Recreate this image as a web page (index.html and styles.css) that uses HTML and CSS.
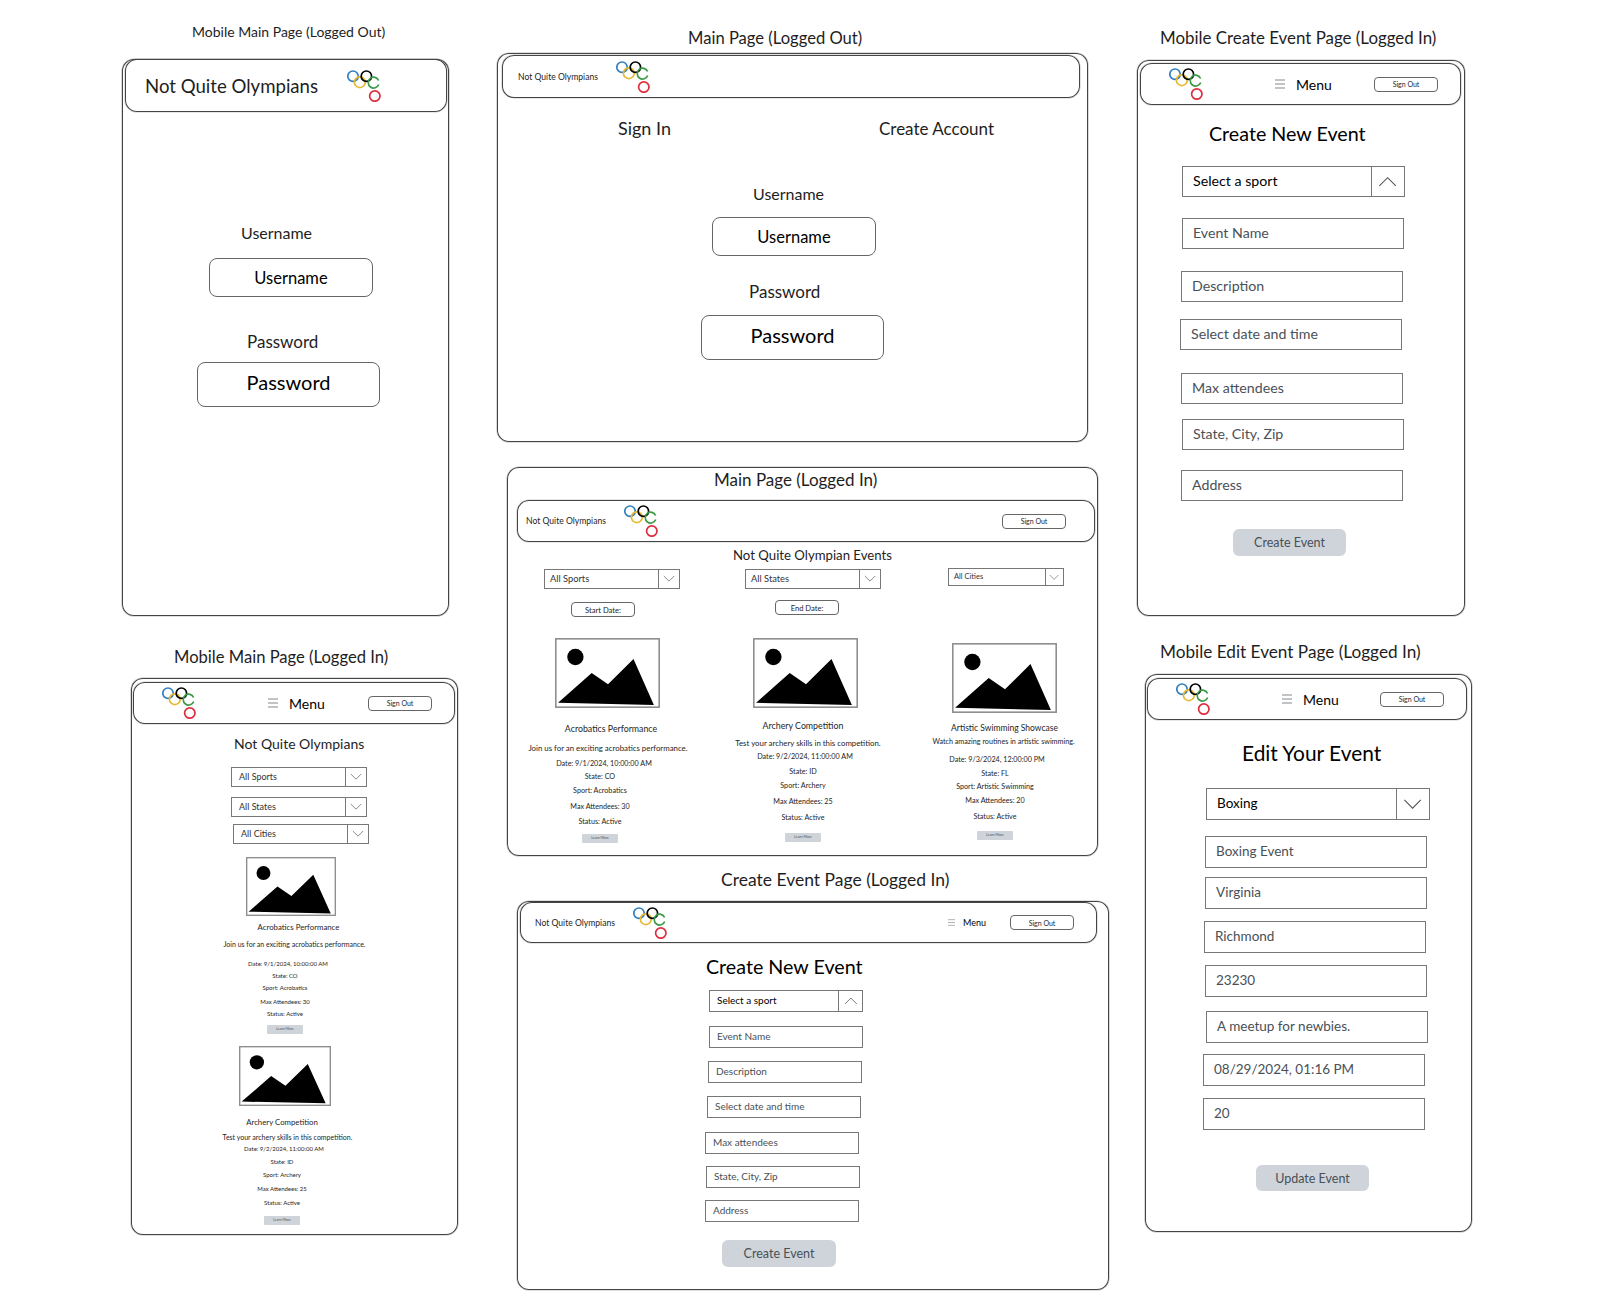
FILE: index.html
```html
<!DOCTYPE html>
<html lang="en">
<head>
    <meta charset="UTF-8">
    <meta name="viewport" content="width=device-width, initial-scale=1.0">
    <title>Not Quite Olympians wireframes</title>
    <link rel="stylesheet" href="styles.css">
</head>
<body>
    <!-- shared drawings -->
    <svg class="sprite" aria-hidden="true">
        <symbol id="rings" viewBox="0 0 34 32">
            <g fill="none" stroke-width="1.7">
                <circle cx="6" cy="6.2" r="5.2" stroke="#2f7fc1"/>
                <circle cx="12.8" cy="12.2" r="5.4" stroke="#e6b92e"/>
                <circle cx="19.4" cy="6.2" r="5.2" stroke="#000"/>
                <path d="M31.6 10.5A5.4 5.4 0 1 0 31.7 14.5" stroke="#3a9a48"/>
                <circle cx="27.8" cy="26" r="5.2" stroke="#dc2f3e"/>
            </g>
        </symbol>
        <symbol id="photo" viewBox="0 0 103 68" preserveAspectRatio="none">
            <rect x="0.8" y="0.8" width="101.4" height="66.4" fill="#fff" stroke="#8a8a8a" stroke-width="1.5"/>
            <circle cx="20" cy="18.5" r="8"/>
            <path d="M3 63 36 34 52 45 77 20.5 97 65Z"/>
        </symbol>
        <symbol id="chev-down" viewBox="0 0 14 8">
            <path d="M1 1 7 7 13 1" fill="none" stroke="#555" stroke-width="0.8"/>
        </symbol>
        <symbol id="chev-up" viewBox="0 0 14 8">
            <path d="M1 7 7 1 13 7" fill="none" stroke="#555" stroke-width="0.8"/>
        </symbol>
        <symbol id="burger" viewBox="0 0 10 10">
            <path d="M0 1H10M0 5H10M0 9H10" stroke="#adb1b5" stroke-width="1.4"/>
        </symbol>
    </svg>

    <main class="canvas">

        <!-- Mobile main page, logged out -->
        <h2 class="caption cap-a">Mobile Main Page (Logged Out)</h2>
        <section class="frame frame-a">
            <header class="nav nav-a">
                <span class="brand">Not Quite Olympians</span>
                <svg class="rings"><use href="#rings"/></svg>
            </header>
            <label class="login-label a-user-label">Username</label>
            <div class="pill pill-user a-user">Username</div>
            <label class="login-label pass-label a-pass-label">Password</label>
            <div class="pill pill-pass a-pass">Password</div>
        </section>

        <!-- Main page, logged out -->
        <h2 class="caption cap-b">Main Page (Logged Out)</h2>
        <section class="frame frame-b">
            <header class="nav nav-b">
                <span class="brand">Not Quite Olympians</span>
                <svg class="rings"><use href="#rings"/></svg>
            </header>
            <span class="login-label b-signin">Sign In</span>
            <span class="login-label b-create">Create Account</span>
            <label class="login-label b-user-label">Username</label>
            <div class="pill pill-user b-user">Username</div>
            <label class="login-label pass-label b-pass-label">Password</label>
            <div class="pill pill-pass b-pass">Password</div>
        </section>

        <!-- Main page, logged in -->
        <section class="frame frame-c">
            <h2 class="caption cap-c">Main Page (Logged In)</h2>
            <header class="nav nav-c">
                <span class="brand">Not Quite Olympians</span>
                <svg class="rings"><use href="#rings"/></svg>
                <button class="sign-out">Sign Out</button>
            </header>
            <h3 class="heading c-heading">Not Quite Olympian Events</h3>

            <div class="select select-sm c-sports"><span>All Sports</span><i class="arrow"><svg><use href="#chev-down"/></svg></i></div>
            <div class="select select-sm c-states"><span>All States</span><i class="arrow"><svg><use href="#chev-down"/></svg></i></div>
            <div class="select select-xs c-cities"><span>All Cities</span><i class="arrow"><svg><use href="#chev-down"/></svg></i></div>
            <button class="sign-out date-btn c-start">Start Date:</button>
            <button class="sign-out date-btn c-end">End Date:</button>

            <svg class="photo c-photo-1"><use href="#photo"/></svg>
            <svg class="photo c-photo-2"><use href="#photo"/></svg>
            <svg class="photo c-photo-3"><use href="#photo"/></svg>

            <article class="event ev-c1">
                <h4>Acrobatics Performance</h4>
                <p class="desc">Join us for an exciting acrobatics performance.</p>
                <p class="date">Date: 9/1/2024, 10:00:00 AM</p>
                <p>State: CO</p>
                <p>Sport: Acrobatics</p>
                <p>Max Attendees: 30</p>
                <p>Status: Active</p>
                <button class="learn">Learn More</button>
            </article>
            <article class="event ev-c2">
                <h4>Archery Competition</h4>
                <p class="desc">Test your archery skills in this competition.</p>
                <p class="date">Date: 9/2/2024, 11:00:00 AM</p>
                <p>State: ID</p>
                <p>Sport: Archery</p>
                <p>Max Attendees: 25</p>
                <p>Status: Active</p>
                <button class="learn">Learn More</button>
            </article>
            <article class="event ev-c3">
                <h4>Artistic Swimming Showcase</h4>
                <p class="desc">Watch amazing routines in artistic swimming.</p>
                <p class="date">Date: 9/3/2024, 12:00:00 PM</p>
                <p>State: FL</p>
                <p>Sport: Artistic Swimming</p>
                <p>Max Attendees: 20</p>
                <p>Status: Active</p>
                <button class="learn">Learn More</button>
            </article>
        </section>

        <!-- Mobile main page, logged in -->
        <h2 class="caption cap-d">Mobile Main Page (Logged In)</h2>
        <section class="frame frame-d">
            <header class="nav nav-m nav-d">
                <svg class="rings"><use href="#rings"/></svg>
                <svg class="burger"><use href="#burger"/></svg>
                <span class="menu">Menu</span>
                <button class="sign-out">Sign Out</button>
            </header>
            <h3 class="heading d-heading">Not Quite Olympians</h3>
            <div class="select select-sm d-sports"><span>All Sports</span><i class="arrow"><svg><use href="#chev-down"/></svg></i></div>
            <div class="select select-sm d-states"><span>All States</span><i class="arrow"><svg><use href="#chev-down"/></svg></i></div>
            <div class="select select-sm d-cities"><span>All Cities</span><i class="arrow"><svg><use href="#chev-down"/></svg></i></div>

            <svg class="photo d-photo-1"><use href="#photo"/></svg>
            <article class="event event-sm ev-d1">
                <h4>Acrobatics Performance</h4>
                <p class="desc">Join us for an exciting acrobatics performance.</p>
                <p class="date">Date: 9/1/2024, 10:00:00 AM</p>
                <p>State: CO</p>
                <p>Sport: Acrobatics</p>
                <p>Max Attendees: 30</p>
                <p>Status: Active</p>
                <button class="learn">Learn More</button>
            </article>

            <svg class="photo d-photo-2"><use href="#photo"/></svg>
            <article class="event event-sm ev-d2">
                <h4>Archery Competition</h4>
                <p class="desc">Test your archery skills in this competition.</p>
                <p class="date">Date: 9/2/2024, 11:00:00 AM</p>
                <p>State: ID</p>
                <p>Sport: Archery</p>
                <p>Max Attendees: 25</p>
                <p>Status: Active</p>
                <button class="learn">Learn More</button>
            </article>
        </section>

        <!-- Create event page, logged in -->
        <h2 class="caption cap-e">Create Event Page (Logged In)</h2>
        <section class="frame frame-e">
            <header class="nav nav-e">
                <span class="brand">Not Quite Olympians</span>
                <svg class="rings"><use href="#rings"/></svg>
                <svg class="burger"><use href="#burger"/></svg>
                <span class="menu">Menu</span>
                <button class="sign-out">Sign Out</button>
            </header>
            <h3 class="heading big e-heading">Create New Event</h3>
            <form class="form form-e">
                <div class="select"><span>Select a sport</span><i class="arrow"><svg><use href="#chev-up"/></svg></i></div>
                <div class="field">Event Name</div>
                <div class="field nudge-1">Description</div>
                <div class="field nudge-2">Select date and time</div>
                <div class="field nudge-4">Max attendees</div>
                <div class="field nudge-3">State, City, Zip</div>
                <div class="field nudge-4">Address</div>
                <button class="submit">Create Event</button>
            </form>
        </section>

        <!-- Mobile create event page -->
        <h2 class="caption cap-f">Mobile Create Event Page (Logged In)</h2>
        <section class="frame frame-f">
            <header class="nav nav-m nav-f">
                <svg class="rings"><use href="#rings"/></svg>
                <svg class="burger"><use href="#burger"/></svg>
                <span class="menu">Menu</span>
                <button class="sign-out">Sign Out</button>
            </header>
            <h3 class="heading big f-heading">Create New Event</h3>
            <form class="form form-f">
                <div class="select"><span>Select a sport</span><i class="arrow"><svg><use href="#chev-up"/></svg></i></div>
                <div class="field">Event Name</div>
                <div class="field nudge-1">Description</div>
                <div class="field nudge-2">Select date and time</div>
                <div class="field nudge-1">Max attendees</div>
                <div class="field">State, City, Zip</div>
                <div class="field nudge-1">Address</div>
                <button class="submit">Create Event</button>
            </form>
        </section>

        <!-- Mobile edit event page -->
        <h2 class="caption cap-g">Mobile Edit Event Page (Logged In)</h2>
        <section class="frame frame-g">
            <header class="nav nav-m nav-g">
                <svg class="rings"><use href="#rings"/></svg>
                <svg class="burger"><use href="#burger"/></svg>
                <span class="menu">Menu</span>
                <button class="sign-out">Sign Out</button>
            </header>
            <h3 class="heading big g-heading">Edit Your Event</h3>
            <form class="form form-g">
                <div class="select nudge-plus"><span>Boxing</span><i class="arrow"><svg><use href="#chev-down"/></svg></i></div>
                <div class="field">Boxing Event</div>
                <div class="field">Virginia</div>
                <div class="field nudge-1">Richmond</div>
                <div class="field">23230</div>
                <div class="field nudge-plus">A meetup for newbies.</div>
                <div class="field nudge-2">08/29/2024, 01:16 PM</div>
                <div class="field nudge-2">20</div>
                <button class="submit">Update Event</button>
            </form>
        </section>

    </main>
</body>
</html>
```

FILE: styles.css
```css
body {
    margin: 0;
    background-color: #fff;
    color: #1e1e1e;
    font-family: "Lato", "Noto Sans", sans-serif;
}
h2, h3, h4, p {
    margin: 0;
    font-weight: 400;
}
button {
    font-family: inherit;
    color: inherit;
    padding: 0;
    background: none;
    border: none;
}
.sprite {
    position: absolute;
    width: 0;
    height: 0;
}

/* The drawing board: every frame sits at its own place on it */
.canvas {
    position: relative;
    width: 1608px;
    height: 1304px;
    overflow: hidden;
}
.frame {
    position: absolute;
    border-radius: 12px;
    box-shadow: inset 0 0 0 1px #444, 0 0 0 0.6px rgba(0, 0, 0, 0.25);
}
.frame > * {
    position: absolute;
}
.frame-a { left: 122px; top: 59px; width: 327px; height: 557px; }
.frame-b { left: 497px; top: 53px; width: 591px; height: 389px; }
.frame-c { left: 507px; top: 467px; width: 591px; height: 389px; }
.frame-d { left: 131px; top: 678px; width: 327px; height: 557px; }
.frame-e { left: 517px; top: 901px; width: 592px; height: 389px; }
.frame-f { left: 1137px; top: 60px; width: 328px; height: 556px; }
.frame-g { left: 1145px; top: 674px; width: 327px; height: 558px; }

/* Captions above the frames */
.caption {
    position: absolute;
    white-space: nowrap;
    line-height: 20px;
    font-size: 17px;
}
.cap-a { left: 192px; top: 22px; font-size: 14px; }
.cap-b { left: 688px; top: 28px; font-size: 16.6px; }
.cap-c { left: 207px; top: 3px; }
.cap-d { left: 174px; top: 647px; font-size: 16.6px; }
.cap-e { left: 721px; top: 870px; font-size: 17.5px; }
.cap-f { left: 1160px; top: 28px; font-size: 16.9px; }
.cap-g { left: 1160px; top: 642px; font-size: 17.2px; }

/* Navigation bars */
.nav {
    display: flex;
    align-items: center;
    box-sizing: border-box;
    height: 42px;
    border-radius: 12px;
    box-shadow: inset 0 0 0 1px #444, 0 0 0 0.6px rgba(0, 0, 0, 0.2);
}
.brand {
    flex: none;
    font-size: 8.6px;
    white-space: nowrap;
}
.rings {
    flex: none;
    width: 34px;
    height: 32px;
}
.nav-a { left: 3px; top: 0; width: 322px; height: 53px; padding-left: 20px; }
.nav-a .brand { width: 202px; font-size: 18.6px; }
.nav-b { left: 5px; top: 2px; width: 578px; height: 43px; padding-left: 16px; }
.nav-b .brand { width: 98px; }
.nav-c { left: 10px; top: 33px; width: 578px; padding: 0 29px 0 9px; }
.nav-c .brand { width: 98px; }
.nav-e { left: 3px; top: 1px; width: 577px; height: 41px; padding: 0 23px 0 15px; }
.nav-e .brand { width: 98px; }
.nav-e .burger { width: 7px; height: 7px; margin-left: 281px; }
.nav-e .menu { margin-left: 8px; font-size: 9px; }

.nav-m { padding: 0 23px 0 29px; width: 320px; }
.nav-d { left: 2px; top: 4px; width: 322px; }
.nav-f { left: 3px; top: 3px; width: 321px; }
.nav-g { left: 2px; top: 4px; }

.burger {
    flex: none;
    width: 10px;
    height: 10px;
    margin-left: 72px;
}
.menu {
    margin-left: 11px;
    font-size: 14px;
    color: #000;
}
.sign-out {
    flex: none;
    width: 64px;
    height: 15px;
    margin-left: auto;
    border: 1px solid #666;
    border-radius: 4px;
    box-sizing: border-box;
    font-size: 7px;
    line-height: 12px;
}
.date-btn { font-size: 7.6px; }
.c-start { left: 64px; top: 135px; }
.c-end { left: 268px; top: 133px; }

/* Login boxes */
.login-label {
    font-size: 16px;
    line-height: 20px;
    white-space: nowrap;
}
.pass-label { font-size: 17px; }
.a-user-label { left: 119px; top: 164px; }
.a-pass-label { left: 125px; top: 273px; }
.b-signin { left: 121px; top: 65px; font-size: 18px; }
.b-create { left: 382px; top: 66px; font-size: 17px; }
.b-user-label { left: 256px; top: 131px; }
.b-pass-label { left: 252px; top: 229px; }

.pill {
    display: flex;
    align-items: center;
    justify-content: center;
    box-sizing: border-box;
    border: 1px solid #666;
    border-radius: 8px;
    color: #000;
}
.pill-user { width: 164px; height: 39px; font-size: 16.5px; }
.pill-pass { width: 183px; height: 45px; padding-bottom: 6px; font-size: 20px; }
.a-user { left: 87px; top: 199px; }
.a-pass { left: 75px; top: 303px; }
.b-user { left: 215px; top: 164px; }
.b-pass { left: 204px; top: 262px; }

/* Headings inside the frames */
.heading {
    font-size: 14px;
    line-height: 20px;
    white-space: nowrap;
}
.big { font-size: 19.7px; line-height: 24px; color: #000; }
.c-heading { left: 226px; top: 78px; font-size: 13.2px; }
.d-heading { left: 103px; top: 56px; }
.e-heading { left: 189px; top: 54px; }
.f-heading { left: 72px; top: 62px; }
.g-heading { left: 97px; top: 67px; font-size: 20.9px; }

/* Selects and input fields */
.select, .field {
    display: flex;
    align-items: center;
    box-sizing: border-box;
    border: 1px solid #777;
}
.select {
    justify-content: space-between;
    color: #000;
}
.select > span { padding-bottom: 1px; }
.arrow {
    display: flex;
    align-items: center;
    justify-content: center;
    align-self: stretch;
    border-left: 1px solid #777;
}
.arrow svg {
    width: 60%;
    height: 40%;
}
.select-sm {
    width: 136px;
    height: 20px;
    padding-left: 7px;
    font-size: 9px;
    color: #333;
}
.select-sm .arrow { width: 20px; }
.select-xs {
    width: 116px;
    height: 18px;
    padding-left: 5px;
    font-size: 7.5px;
    color: #333;
}
.select-xs .arrow { width: 17px; }
.c-sports { left: 37px; top: 102px; padding-left: 5px; font-size: 9.3px; }
.c-states { left: 238px; top: 102px; padding-left: 5px; font-size: 9.3px; }
.c-cities { left: 441px; top: 101px; }
.d-sports { left: 100px; top: 89px; }
.d-states { left: 100px; top: 119px; }
.d-cities { left: 102px; top: 146px; }

.form {
    display: grid;
    justify-items: start;
}
.field { color: #495057; }
.nudge-1 { margin-left: -1px; }
.nudge-2 { margin-left: -2px; }
.nudge-3 { margin-left: -3px; }
.nudge-4 { margin-left: -4px; }
.nudge-plus { margin-left: 1px; }
.submit {
    display: block;
    background-color: #ced4da;
    border-radius: 6px;
    font-size: 12.5px;
    color: #495057;
}

.form-e {
    left: 192px;
    top: 89px;
    grid-template-rows: 36px 35px 35px 36px 34px 34px 40px auto;
    font-size: 10px;
}
.form-e .select, .form-e .field { width: 154px; height: 22px; padding-left: 7px; }
.form-e .field, .form-e .select > span { padding-bottom: 2px; }
.form-e .arrow { width: 23px; }
.form-e .submit { width: 114px; height: 27px; margin-left: 13px; }

.form-f {
    left: 45px;
    top: 106px;
    grid-template-rows: 52px 53px 48px 54px 46px 51px 59px auto;
    font-size: 14.2px;
}
.form-f .select, .form-f .field { width: 222px; height: 31px; padding-left: 10px; }
.form-f .field, .form-f .select > span { padding-bottom: 3px; }
.form-f .select { width: 223px; }
.form-f .arrow { width: 32px; }
.form-f .submit { width: 113px; height: 27px; margin-left: 51px; }

.form-g {
    left: 60px;
    top: 114px;
    grid-template-rows: 48px 41px 44px 44px 46px 43px 44px 67px auto;
    font-size: 13.5px;
}
.form-g .select, .form-g .field { width: 222px; height: 32px; padding-left: 10px; }
.form-g .field, .form-g .select > span { padding-bottom: 3px; }
.form-g .select { width: 224px; }
.form-g .arrow { width: 32px; }
.form-g .submit { width: 113px; height: 26px; margin-left: 51px; }

/* Picture placeholders */
.photo {
    width: 105px;
    height: 70px;
}
.c-photo-1 { left: 48px; top: 171px; }
.c-photo-2 { left: 246px; top: 171px; }
.c-photo-3 { left: 445px; top: 176px; }
.d-photo-1 { left: 115px; top: 179px; width: 90px; height: 59px; }
.d-photo-2 { left: 108px; top: 368px; width: 92px; height: 60px; }

/* Event listings: each row value is the pitch to the next line */
.event {
    display: grid;
    justify-items: center;
    width: 200px;
    font-size: 7.2px;
    line-height: 10px;
    white-space: nowrap;
}
.event h4 { font-size: 8.8px; font-weight: 400; }
.event .desc { font-size: 7.85px; }
.learn {
    width: 36px;
    height: 9px;
    background-color: #ced4da;
    border-radius: 1px;
    font-size: 3.5px;
    line-height: 9px;
    color: #495057;
}
.event-sm { width: 170px; font-size: 6px; }
.event-sm h4 { font-size: 7.8px; }
.event-sm .desc { font-size: 7px; }

.ev-c1 { left: -7px; top: 257px; grid-template-rows: 19px 16px 13px 14px 16px 15px 17px auto; }
.ev-c1 h4 { margin-left: 22px; }
.ev-c1 .desc { margin-left: 16px; }
.ev-c1 .date { margin-left: 8px; }
.ev-c2 { left: 196px; top: 254px; grid-template-rows: 17px 14px 15px 14px 16px 16px 20px auto; }
.ev-c2 .desc { margin-left: 10px; }
.ev-c2 .date { margin-left: 4px; }
.ev-c3 { left: 388px; top: 256px; grid-template-rows: 14px 18px 14px 13px 14px 16px 19px auto; }
.ev-c3 h4 { font-size: 8.5px; margin-left: 19px; }
.ev-c3 .desc { font-size: 7.2px; margin-left: 17px; }
.ev-c3 .date { margin-left: 4px; }
.ev-d1 { left: 69px; top: 244px; grid-template-rows: 17px 20px 12px 12px 14px 12px 16px auto; }
.ev-d1 h4 { margin-left: 27px; }
.ev-d1 .desc { margin-left: 19px; }
.ev-d1 .date { margin-left: 6px; }
.ev-d2 { left: 66px; top: 439px; grid-template-rows: 15px 12px 13px 13px 14px 14px 18px auto; }
.ev-d2 .desc { margin-left: 11px; }
.ev-d2 .date { margin-left: 4px; }
```
